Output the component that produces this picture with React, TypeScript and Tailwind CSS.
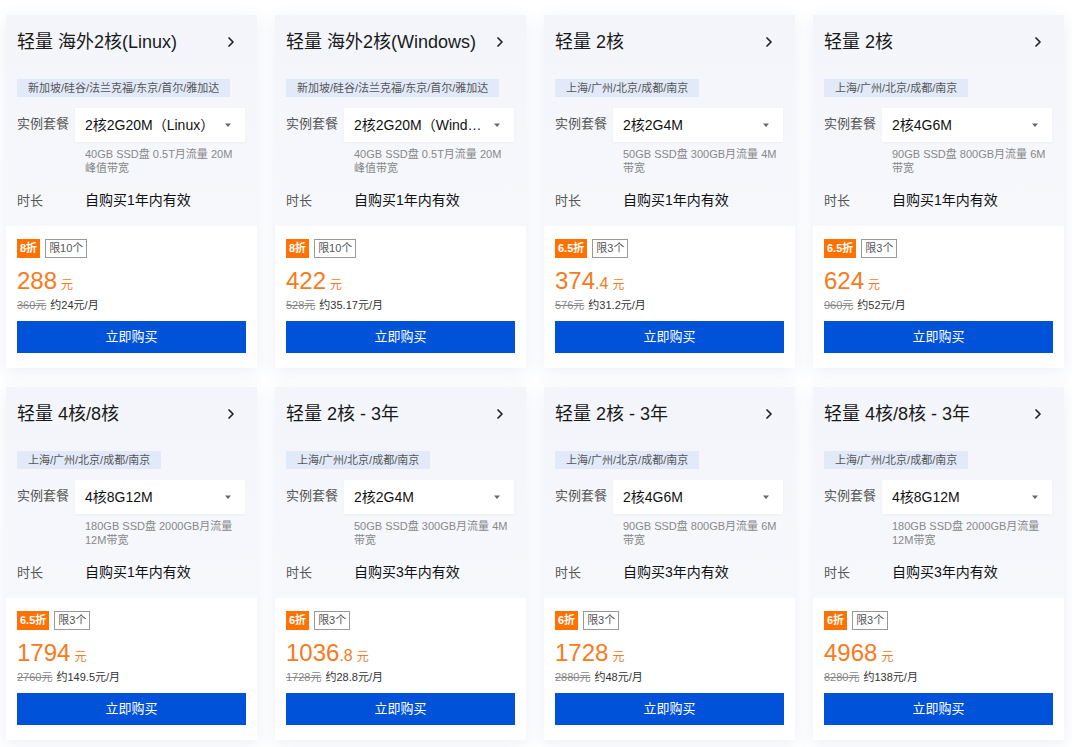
import { ChevronRight } from 'lucide-react';

interface Plan {
  title: string;
  regions: string;
  spec: string;
  desc: [string, string];
  duration: string;
  discount: string;
  limit: string;
  price: string;
  decimal?: string;
  original: string;
  monthly: string;
}

const plans: Plan[] = [
  {
    title: '轻量 海外2核(Linux)',
    regions: '新加坡/硅谷/法兰克福/东京/首尔/雅加达',
    spec: '2核2G20M（Linux）',
    desc: ['40GB SSD盘 0.5T月流量 20M', '峰值带宽'],
    duration: '自购买1年内有效',
    discount: '8折',
    limit: '限10个',
    price: '288',
    original: '360元',
    monthly: '约24元/月',
  },
  {
    title: '轻量 海外2核(Windows)',
    regions: '新加坡/硅谷/法兰克福/东京/首尔/雅加达',
    spec: '2核2G20M（Windows）',
    desc: ['40GB SSD盘 0.5T月流量 20M', '峰值带宽'],
    duration: '自购买1年内有效',
    discount: '8折',
    limit: '限10个',
    price: '422',
    original: '528元',
    monthly: '约35.17元/月',
  },
  {
    title: '轻量 2核',
    regions: '上海/广州/北京/成都/南京',
    spec: '2核2G4M',
    desc: ['50GB SSD盘 300GB月流量 4M', '带宽'],
    duration: '自购买1年内有效',
    discount: '6.5折',
    limit: '限3个',
    price: '374',
    decimal: '.4',
    original: '576元',
    monthly: '约31.2元/月',
  },
  {
    title: '轻量 2核',
    regions: '上海/广州/北京/成都/南京',
    spec: '2核4G6M',
    desc: ['90GB SSD盘 800GB月流量 6M', '带宽'],
    duration: '自购买1年内有效',
    discount: '6.5折',
    limit: '限3个',
    price: '624',
    original: '960元',
    monthly: '约52元/月',
  },
  {
    title: '轻量 4核/8核',
    regions: '上海/广州/北京/成都/南京',
    spec: '4核8G12M',
    desc: ['180GB SSD盘 2000GB月流量', '12M带宽'],
    duration: '自购买1年内有效',
    discount: '6.5折',
    limit: '限3个',
    price: '1794',
    original: '2760元',
    monthly: '约149.5元/月',
  },
  {
    title: '轻量 2核 - 3年',
    regions: '上海/广州/北京/成都/南京',
    spec: '2核2G4M',
    desc: ['50GB SSD盘 300GB月流量 4M', '带宽'],
    duration: '自购买3年内有效',
    discount: '6折',
    limit: '限3个',
    price: '1036',
    decimal: '.8',
    original: '1728元',
    monthly: '约28.8元/月',
  },
  {
    title: '轻量 2核 - 3年',
    regions: '上海/广州/北京/成都/南京',
    spec: '2核4G6M',
    desc: ['90GB SSD盘 800GB月流量 6M', '带宽'],
    duration: '自购买3年内有效',
    discount: '6折',
    limit: '限3个',
    price: '1728',
    original: '2880元',
    monthly: '约48元/月',
  },
  {
    title: '轻量 4核/8核 - 3年',
    regions: '上海/广州/北京/成都/南京',
    spec: '4核8G12M',
    desc: ['180GB SSD盘 2000GB月流量', '12M带宽'],
    duration: '自购买3年内有效',
    discount: '6折',
    limit: '限3个',
    price: '4968',
    original: '8280元',
    monthly: '约138元/月',
  },
];

const PlanCard = ({ plan }: { plan: Plan }) => (
  <article className="flex h-[353px] w-[251px] flex-col overflow-hidden bg-white shadow-[0_4px_16px_rgba(55,99,170,0.10)]">
    <div className="flex h-[211px] flex-col bg-gradient-to-b from-[#f3f5fa] to-[#f6f8fc] px-[11px] pt-[15px]">
      <header className="flex h-6 items-center justify-between">
        <h3 className="text-[18px] leading-6 text-[#1a1a1a]">{plan.title}</h3>
        <ChevronRight className="mr-[7px] h-4 w-4 text-[#222]" strokeWidth={2.6} />
      </header>
      <div className="mt-[25px] h-[18px] self-start bg-[#e2eaf9] px-[11px] text-[11px] leading-[18px] text-[#555]">
        {plan.regions}
      </div>
      <div className="mt-[11px] flex">
        <span className="w-[58px] pt-[7px] text-[13px] leading-[18px] text-[#555]">实例套餐</span>
        <div className="flex flex-col">
          <div className="flex h-[34px] w-[170px] items-center justify-between bg-white pl-[10px] pr-[13px] shadow-[0_1px_3px_rgba(0,0,0,0.04)]">
            <span className="truncate text-[14px] text-[#111]">{plan.spec}</span>
            <svg className="ml-2 h-2 w-2 shrink-0" viewBox="0 0 8 8">
              <path d="M1 2.5h6L4 6z" fill="#666" />
            </svg>
          </div>
          <p className="mt-[5px] w-[170px] whitespace-nowrap pl-[10px] text-[11px] leading-[14px] text-[#888]">
            {plan.desc[0]}
            <br />
            {plan.desc[1]}
          </p>
        </div>
      </div>
      <div className="mt-[15px] flex items-center">
        <span className="w-[68px] text-[13px] text-[#555]">时长</span>
        <span className="text-[14px] text-[#111]">{plan.duration}</span>
      </div>
    </div>
    <div className="flex flex-1 flex-col px-[11px] pt-[13px]">
      <div className="flex gap-[5px]">
        <span className="h-[19px] bg-[#ff7200] px-[3px] text-[11px] font-bold leading-[19px] text-white">
          {plan.discount}
        </span>
        <span className="h-[19px] border border-[#999] px-[3px] text-[11px] leading-[17px] text-[#555]">
          {plan.limit}
        </span>
      </div>
      <div className="mt-[7px] flex h-[32px] items-baseline text-[#f77a1c]">
        <span className="text-[24px] leading-[32px]">{plan.price}</span>
        {plan.decimal && <span className="text-[16px]">{plan.decimal}</span>}
        <span className="ml-1 text-[12px]">元</span>
      </div>
      <div className="flex h-[16px] items-center gap-1 text-[11px] text-[#333]">
        <span className="text-[#888] line-through">{plan.original}</span>
        <span>{plan.monthly}</span>
      </div>
      <button className="mt-[8px] h-[32px] w-full bg-[#0052d9] text-[13px] text-white">立即购买</button>
    </div>
  </article>
);

export default function App() {
  return (
    <div
      className="min-h-[747px] w-[1072px] bg-white pl-[6px] pt-[15px]"
      style={{ fontFamily: '"Liberation Sans", "Noto Sans CJK SC", sans-serif' }}
    >
      <div className="grid grid-cols-[repeat(4,251px)] gap-x-[18px] gap-y-[19px]">
        {plans.map((plan, i) => (
          <PlanCard key={i} plan={plan} />
        ))}
      </div>
    </div>
  );
}
